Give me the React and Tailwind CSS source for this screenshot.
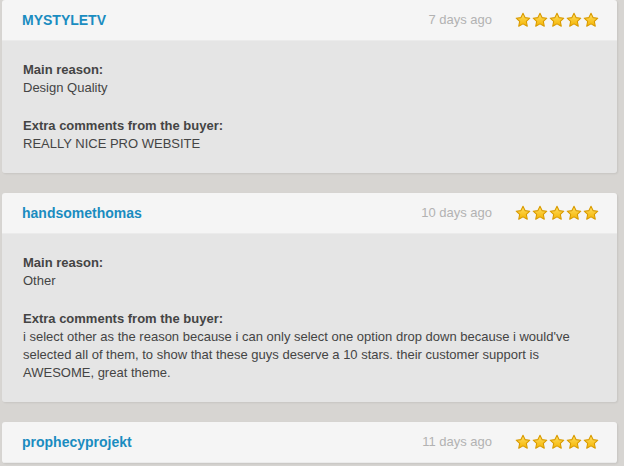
import React from "react";

function Star() {
  return (
    <svg width="16" height="16" viewBox="0 0 24 24" className="block">
      <defs>
        <linearGradient id="sg" x1="0" y1="0" x2="0" y2="1">
          <stop offset="0" stopColor="#ffe066" />
          <stop offset="1" stopColor="#f5b400" />
        </linearGradient>
      </defs>
      <path
        d="M12 1.8l3.1 6.6 7.1.9-5.2 4.9 1.4 7.1L12 17.8l-6.4 3.5 1.4-7.1L1.8 9.3l7.1-.9z"
        fill="url(#sg)"
        stroke="#d89a00"
        strokeWidth="1.6"
        strokeLinejoin="round"
      />
    </svg>
  );
}

function Stars() {
  return (
    <div className="flex gap-[1px]">
      <Star />
      <Star />
      <Star />
      <Star />
      <Star />
    </div>
  );
}

function Review({ name, date, reason, comment }) {
  return (
    <div className="mx-[2px] w-[615px] rounded-[3px] shadow-[1px_1px_2px_rgba(0,0,0,0.08)] overflow-hidden">
      <div className="h-[41px] bg-[#f5f5f5] border-b border-[#ebebeb] flex items-center pl-[20px] pr-[18px]">
        <div className="text-[14px] font-bold text-[#1a8cc0] flex-1">{name}</div>
        <div className="text-[13px] text-[#b2b2b2] mr-[23px]">{date}</div>
        <Stars />
      </div>
      {reason !== undefined && (
        <div className="bg-[#e5e5e5] px-[21px] py-[20px] text-[13px] leading-[18px] text-[#444]">
          <div className="font-bold">Main reason:</div>
          <div>{reason}</div>
          <div className="h-[20px]" />
          <div className="font-bold">Extra comments from the buyer:</div>
          <div>{comment}</div>
        </div>
      )}
    </div>
  );
}

export default function App() {
  return (
    <div
      className="w-[624px] h-[466px] overflow-hidden bg-[#d7d5d2] flex flex-col gap-[20px]"
      style={{ fontFamily: '"Liberation Sans", Arial, sans-serif' }}
    >
      <Review
        name="MYSTYLETV"
        date="7 days ago"
        reason="Design Quality"
        comment="REALLY NICE PRO WEBSITE"
      />
      <Review
        name="handsomethomas"
        date="10 days ago"
        reason="Other"
        comment="i select other as the reason because i can only select one option drop down because i would've selected all of them, to show that these guys deserve a 10 stars. their customer support is AWESOME, great theme."
      />
      <Review name="prophecyprojekt" date="11 days ago" />
    </div>
  );
}
